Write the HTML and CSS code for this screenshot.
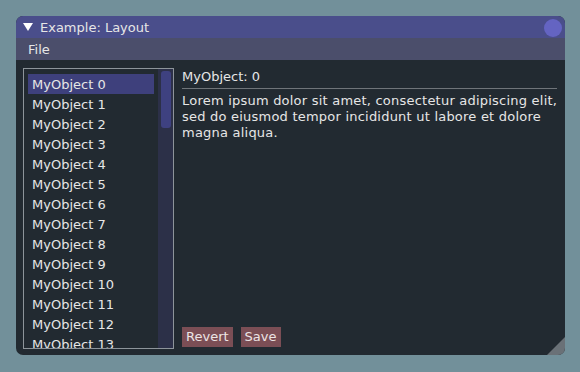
FILE: index.html
```html
<!DOCTYPE html>
<html>
<head>
<meta charset="utf-8">
<link rel="stylesheet" href="styles.css">
</head>
<body>
<div class="window">
  <div class="titlebar">
    <svg class="collapse" width="10" height="8" viewBox="0 0 10 8"><polygon points="0,0 10,0 5,8" fill="#ffffff"/></svg>
    <span class="title">Example: Layout</span>
    <span class="close"></span>
  </div>
  <div class="menubar"><span class="menu">File</span></div>
  <div class="content">
    <div class="listbox">
      <div class="items">
        <div class="item selected">MyObject 0</div>
        <div class="item">MyObject 1</div>
        <div class="item">MyObject 2</div>
        <div class="item">MyObject 3</div>
        <div class="item">MyObject 4</div>
        <div class="item">MyObject 5</div>
        <div class="item">MyObject 6</div>
        <div class="item">MyObject 7</div>
        <div class="item">MyObject 8</div>
        <div class="item">MyObject 9</div>
        <div class="item">MyObject 10</div>
        <div class="item">MyObject 11</div>
        <div class="item">MyObject 12</div>
        <div class="item">MyObject 13</div>
      </div>
      <div class="scrollbar"><div class="grab"></div></div>
    </div>
    <div class="detail">
      <div class="heading">MyObject: 0</div>
      <div class="separator"></div>
      <p class="body-text">Lorem ipsum dolor sit amet, consectetur adipiscing elit,<br>sed do eiusmod tempor incididunt ut labore et dolore<br>magna aliqua.</p>
      <div class="buttons">
        <span class="btn">Revert</span>
        <span class="btn">Save</span>
      </div>
    </div>
  </div>
  <div class="grip"></div>
</div>
</body>
</html>
```
FILE: styles.css
```css
html, body {
  margin: 0;
  padding: 0;
}
body {
  background: #72909a;
  width: 580px;
  height: 372px;
  padding: 16px 0 0 16px;
  box-sizing: border-box;
  font-family: "DejaVu Sans", sans-serif;
  font-size: 13px;
  line-height: 16px;
  color: #e6e6e6;
}
.window {
  position: relative;
  width: 549px;
  height: 339px;
  border-radius: 7px;
  overflow: hidden;
  background: #222a31;
  display: flex;
  flex-direction: column;
}
.titlebar {
  height: 22px;
  background: #4a4e8b;
  display: flex;
  align-items: center;
  padding-left: 7px;
  box-sizing: border-box;
}
.collapse {
  margin-right: 7px;
  margin-top: -1px;
}
.title {
  flex: 1;
  margin-top: 1px;
}
.close {
  width: 18px;
  height: 18px;
  border-radius: 50%;
  background: #6464c2;
  margin-right: 3px;
  margin-top: 1px;
}
.menubar {
  height: 22px;
  background: #4b4e6b;
  display: flex;
  align-items: center;
  padding-left: 12px;
}
.menu {
  margin-top: 1px;
}
.content {
  flex: 1;
  display: flex;
  gap: 8px;
  padding: 8px 8px 6px 7px;
  min-height: 0;
}
.listbox {
  width: 151px;
  border: 1px solid #8d949a;
  box-sizing: border-box;
  display: flex;
  min-height: 0;
}
.items {
  flex: 1;
  padding: 5px 4px 0 4px;
  overflow: hidden;
  min-width: 0;
}
.item {
  height: 20px;
  line-height: 16px;
  padding: 3px 0 1px 4px;
  box-sizing: border-box;
  white-space: nowrap;
}
.item.selected {
  background: #3e407c;
}
.scrollbar {
  width: 15px;
  background: #2c3048;
  padding: 2px 2px 0 3px;
  box-sizing: border-box;
}
.grab {
  height: 57px;
  background: #3e4180;
  border-radius: 3px;
}
.detail {
  flex: 1;
  display: flex;
  flex-direction: column;
  padding-top: 1px;
  min-width: 0;
}
.heading {
  height: 16px;
}
.separator {
  height: 1px;
  background: #6f7479;
  margin-top: 3px;
}
.body-text {
  margin: 4px 0 0 0;
  flex: 1;
  white-space: nowrap;
  letter-spacing: 0.22px;
}
.buttons {
  display: flex;
  gap: 8px;
  margin-bottom: 2px;
}
.btn {
  background: #7b4e55;
  height: 20px;
  line-height: 20px;
  padding: 0 4px;
  color: #ece4e4;
}
.grip {
  position: absolute;
  right: 0;
  bottom: 0;
  width: 18px;
  height: 18px;
  background: #6a7177;
  clip-path: polygon(100% 0, 100% 100%, 0 100%);
}
```
